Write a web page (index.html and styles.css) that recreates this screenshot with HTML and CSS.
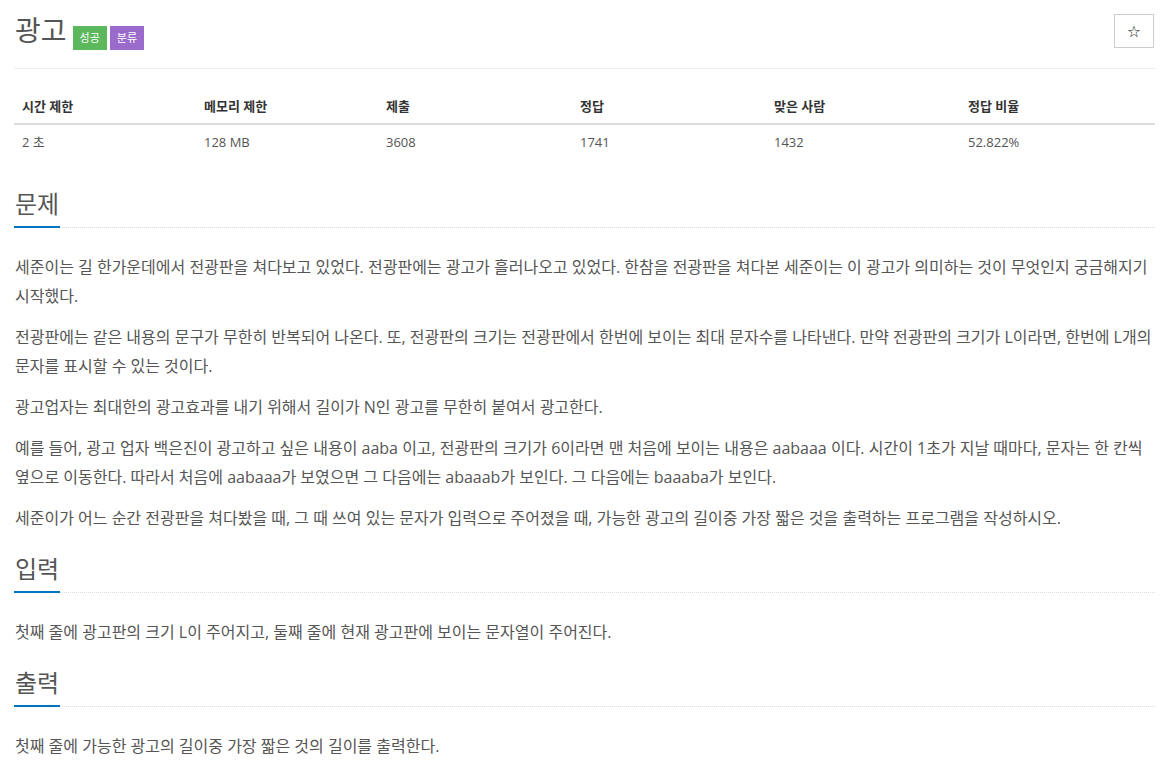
FILE: index.html
```html
<!DOCTYPE html>
<html lang="ko">
<head>
<meta charset="utf-8">
<title>광고</title>
<link rel="stylesheet" href="styles.css">
</head>
<body>
<div class="page">
  <div class="title-row">
    <h1 class="title"><span class="title-text">광고</span><span class="label label-success">성공</span><span class="label label-purple">분류</span></h1>
    <button class="star-btn" type="button">☆</button>
  </div>
  <div class="divider"></div>

  <table class="info">
    <thead>
      <tr>
        <th class="c1">시간 제한</th>
        <th class="c2">메모리 제한</th>
        <th class="c3">제출</th>
        <th class="c4">정답</th>
        <th class="c5">맞은 사람</th>
        <th class="c6">정답 비율</th>
      </tr>
    </thead>
    <tbody>
      <tr>
        <td>2 초</td>
        <td>128 MB</td>
        <td>3608</td>
        <td>1741</td>
        <td>1432</td>
        <td>52.822%</td>
      </tr>
    </tbody>
  </table>

  <section class="section">
    <div class="headline"><h2>문제</h2></div>
    <div class="body">
      <p>세준이는 길 한가운데에서 전광판을 쳐다보고 있었다. 전광판에는 광고가 흘러나오고 있었다. 한참을 전광판을 쳐다본 세준이는 이 광고가 의미하는 것이 무엇인지 궁금해지기 시작했다.</p>
      <p>전광판에는 같은 내용의 문구가 무한히 반복되어 나온다. 또, 전광판의 크기는 전광판에서 한번에 보이는 최대 문자수를 나타낸다. 만약 전광판의 크기가 L이라면, 한번에 L개의 문자를 표시할 수 있는 것이다.</p>
      <p>광고업자는 최대한의 광고효과를 내기 위해서 길이가 N인 광고를 무한히 붙여서 광고한다.</p>
      <p>예를 들어, 광고 업자 백은진이 광고하고 싶은 내용이 aaba 이고, 전광판의 크기가 6이라면 맨 처음에 보이는 내용은 aabaaa 이다. 시간이 1초가 지날 때마다, 문자는 한 칸씩 옆으로 이동한다. 따라서 처음에 aabaaa가 보였으면 그 다음에는 abaaab가 보인다. 그 다음에는 baaaba가 보인다.</p>
      <p>세준이가 어느 순간 전광판을 쳐다봤을 때, 그 때 쓰여 있는 문자가 입력으로 주어졌을 때, 가능한 광고의 길이중 가장 짧은 것을 출력하는 프로그램을 작성하시오.</p>
    </div>
  </section>

  <section class="section">
    <div class="headline"><h2>입력</h2></div>
    <div class="body">
      <p>첫째 줄에 광고판의 크기 L이 주어지고, 둘째 줄에 현재 광고판에 보이는 문자열이 주어진다.</p>
    </div>
  </section>

  <section class="section">
    <div class="headline"><h2>출력</h2></div>
    <div class="body">
      <p>첫째 줄에 가능한 광고의 길이중 가장 짧은 것의 길이를 출력한다.</p>
    </div>
  </section>
</div>
</body>
</html>
```

FILE: styles.css
```css
html, body {
  margin: 0;
  padding: 0;
  background: #fff;
}
body {
  font-family: "Open Sans", "Noto Sans CJK KR", sans-serif;
  color: #555;
  font-size: 13px;
}
.page {
  padding: 0 15px 0 14px;
}
.title-row {
  display: flex;
  justify-content: space-between;
  align-items: flex-start;
  padding-top: 12px;
}
.title {
  margin: 0;
  font-weight: 400;
  font-size: 28px;
  line-height: 36px;
  display: flex;
  align-items: flex-start;
  color: #555;
}
.title-text {
  margin-left: 1px;
  margin-right: 6px;
}
.label {
  display: inline-block;
  font-size: 11px;
  line-height: 24px;
  height: 24px;
  padding: 0 7px;
  color: #fff;
  margin-right: 3px;
  margin-top: 14px;
}
.label-success { background: #5cb85c; }
.label-purple { background: #9b6bcc; }
.star-btn {
  width: 40px;
  height: 34px;
  border: 1px solid #ccc;
  background: #fff;
  color: #222;
  font-size: 16px;
  padding: 0;
  margin-top: 2px;
  margin-right: 1px;
  font-family: "DejaVu Sans", sans-serif;
}
.divider {
  border-top: 1px solid #eee;
  margin-top: 18px;
}
.info {
  width: 100%;
  border-collapse: collapse;
  margin-top: 20px;
  margin-bottom: 27px;
  table-layout: fixed;
}
.info th, .info td {
  text-align: left;
  padding: 8px;
  font-size: 13px;
  line-height: 18px;
}
.info th {
  font-weight: 700;
  color: #333;
  border-bottom: 2px solid #ddd;
}
.info td { color: #555; }
.c1 { width: 166px; }
.c2 { width: 166px; }
.c3 { width: 178px; }
.c4 { width: 178px; }
.c5 { width: 178px; }
.section {
  margin-top: 18px;
}
.headline {
  border-bottom: 1px dotted #ddd;
}
.headline h2 {
  display: inline-block;
  margin: 0 0 -1px 0;
  font-weight: 400;
  font-size: 24px;
  line-height: 36px;
  padding: 0 1px 4px 1px;
  border-bottom: 2px solid #0076c0;
  color: #555;
  min-width: 38px;
}
.body {
  padding-top: 25px;
}
.body p {
  margin: 0 0 12px 1px;
  font-size: 16px;
  line-height: 29px;
  color: #555;
}
```
